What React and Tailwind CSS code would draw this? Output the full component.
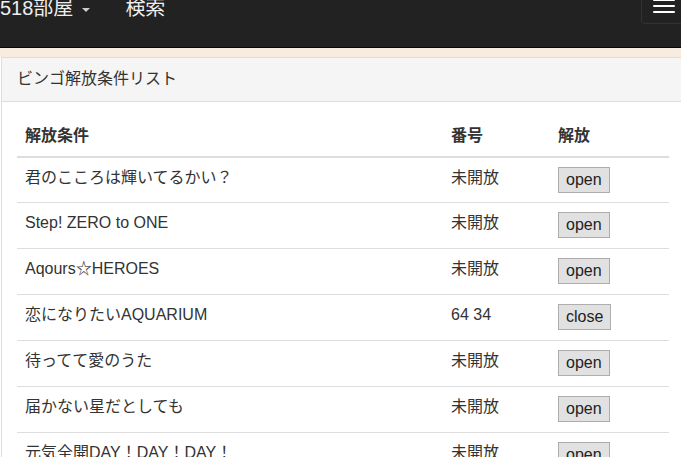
import React from "react";

const rows = [
  { name: "君のこころは輝いてるかい？", num: "未開放", action: "open" },
  { name: "Step! ZERO to ONE", num: "未開放", action: "open" },
  { name: "Aqours☆HEROES", num: "未開放", action: "open" },
  { name: "恋になりたいAQUARIUM", num: "64 34", action: "close" },
  { name: "待ってて愛のうた", num: "未開放", action: "open" },
  { name: "届かない星だとしても", num: "未開放", action: "open" },
  { name: "元気全開DAY！DAY！DAY！", num: "未開放", action: "open" },
];

export default function App() {
  return (
    <div
      className="w-[681px] h-[457px] overflow-hidden bg-white text-[#333] text-[16px] leading-[22.86px]"
      style={{ fontFamily: '"Liberation Sans", "Noto Sans CJK JP", sans-serif' }}
    >
      {/* navbar */}
      <div className="relative flex items-start h-[48px] bg-[#222] border-b border-[#080808]">
        <div className="flex items-center h-[20px] -mt-[2px] text-[20px] leading-[20px] text-[#eee]">
          <span className="flex items-center">
            518部屋
            <span className="ml-[9px] mt-[3px] w-0 h-0 border-x-[4px] border-x-transparent border-t-[4px] border-t-[#ccc]" />
          </span>
          <span className="ml-[35px]">検索</span>
        </div>
        <div className="absolute right-[-10px] top-[-12px] w-[50px] h-[36px] border border-[#333] rounded-[4px] flex flex-col items-start pl-[11px] pt-[10px] gap-[4px]">
          <span className="block w-[22px] h-[2px] bg-white rounded-[1px]" />
          <span className="block w-[22px] h-[2px] bg-white rounded-[1px]" />
          <span className="block w-[22px] h-[2px] bg-white rounded-[1px]" />
        </div>
      </div>

      {/* strip */}
      <div className="h-[9px] bg-[#f8ece1]" />

      {/* panel */}
      <div className="ml-[1px] w-[684px] border border-[#ddd] bg-white">
        <div className="bg-[#f5f5f5] border-b border-[#ddd] px-[15px] py-[10px]">
          ビンゴ解放条件リスト
        </div>
        <div className="p-[15px]">
          <table className="w-[652px] border-collapse table-fixed">
            <colgroup>
              <col className="w-[426px]" />
              <col className="w-[107px]" />
              <col className="w-[119px]" />
            </colgroup>
            <thead>
              <tr className="border-b-2 border-[#ddd]">
                <th className="text-left font-bold p-[8px]">解放条件</th>
                <th className="text-left font-bold p-[8px]">番号</th>
                <th className="text-left font-bold p-[8px]">解放</th>
              </tr>
            </thead>
            <tbody>
              {rows.map((r, i) => (
                <tr key={i} className="border-t border-[#ddd] first:border-t-0">
                  <td className="align-top p-[8px] pt-[9px] h-[46px]">{r.name}</td>
                  <td className="align-top p-[8px] pt-[9px]">{r.num}</td>
                  <td className="align-top px-[8px] pt-[9px]">
                    <button className="h-[26px] px-[7px] bg-[#e1e1e1] border border-[#adadad] text-[#222] text-[16px] leading-[22px]">
                      {r.action}
                    </button>
                  </td>
                </tr>
              ))}
            </tbody>
          </table>
        </div>
      </div>
    </div>
  );
}
